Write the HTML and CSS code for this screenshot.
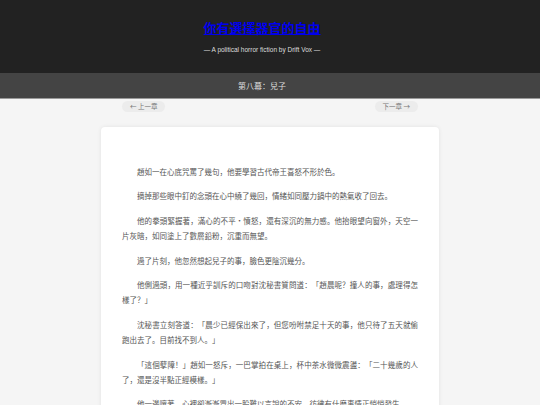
FILE: index.html
```html
<!DOCTYPE html>
<html lang="zh">
<head>
<meta charset="utf-8">
<title>你有選擇器官的自由</title>
<link rel="stylesheet" href="styles.css">
</head>
<body>
<header class="site-header">
  <h1 class="site-title"><a href="#">你有選擇器官的自由</a></h1>
  <p class="site-sub">— A political horror fiction by Drift Vox —</p>
</header>
<div class="chapter-bar">第八幕：兒子</div>
<nav class="chapter-nav">
  <a class="nav-btn" href="#">← 上一章</a>
  <a class="nav-btn" href="#">下一章 →</a>
</nav>
<main class="card">
  <p>趙如一在心底咒罵了幾句，他要學習古代帝王喜怒不形於色。</p>
  <p>摘掉那些眼中釘的念頭在心中繞了幾回，情緒如同壓力鍋中的熱氣收了回去。</p>
  <p>他的拳頭緊握著，滿心的不平・憤怒，還有深沉的無力感。他抬眼望向窗外，天空一片灰暗，如同塗上了數層鉛粉，沉重而無望。</p>
  <p>過了片刻，他忽然想起兒子的事，臉色更陰沉幾分。</p>
  <p>他側過頭，用一種近乎訓斥的口吻對沈秘書質問道：「趙晨呢？撞人的事，處理得怎樣了？」</p>
  <p>沈秘書立刻答道：「晨少已經保出來了，但您吩咐禁足十天的事，他只待了五天就偷跑出去了。目前找不到人。」</p>
  <p>「這個孽障！」趙如一怒斥，一巴掌拍在桌上，杯中茶水微微震盪：「二十幾歲的人了，還是沒半點正經模樣。」</p>
  <p>他一邊嚷著，心裡卻漸漸冒出一股難以言說的不安，彷彿有什麼事情正悄悄發生。</p>
</main>
</body>
</html>
```

FILE: styles.css
```css
html, body {
  margin: 0;
  padding: 0;
}
body {
  background: #f5f5f5;
  font-family: "Noto Sans CJK SC", "Liberation Sans", sans-serif;
  color: #555;
  text-spacing-trim: space-all;
}
.site-header {
  background: #222;
  height: 73px;
  box-sizing: border-box;
  padding: 20px 16px 0 0;
  text-align: center;
}
.site-title {
  margin: 0;
  font-size: 13px;
  line-height: 16px;
  font-weight: bold;
}
.site-title a {
  color: #0000ee;
  text-decoration: underline;
}
.site-sub {
  margin: 9px 0 0;
  font-family: "Liberation Sans", Arial, sans-serif;
  font-size: 6.5px;
  line-height: 10px;
  color: #ddd;
}
.chapter-bar {
  background: #444;
  height: 25px;
  line-height: 25px;
  padding-right: 16px;
  border-bottom: 1px solid #999;
  text-align: center;
  color: #ddd;
  font-size: 8px;
}
.chapter-nav {
  width: 338px;
  margin: 1.5px auto 0;
  padding: 0 21px;
  box-sizing: border-box;
  display: flex;
  justify-content: space-between;
}
.nav-btn {
  display: block;
  height: 11px;
  line-height: 11px;
  padding: 0 8px;
  border-radius: 6px;
  background: #ececec;
  color: #777;
  font-size: 6.5px;
  text-decoration: none;
}
.card {
  display: block;
  width: 338px;
  box-sizing: border-box;
  margin: 15px auto 0;
  padding: 37px 21px 20px;
  background: #fff;
  border-radius: 4px;
  box-shadow: 0 0 4px rgba(0,0,0,0.08);
}
.card p {
  margin: 0 0 9.7px;
  font-size: 7.5px;
  line-height: 15px;
  text-indent: 2em;
  text-align: justify;
  color: #555;
}
```
